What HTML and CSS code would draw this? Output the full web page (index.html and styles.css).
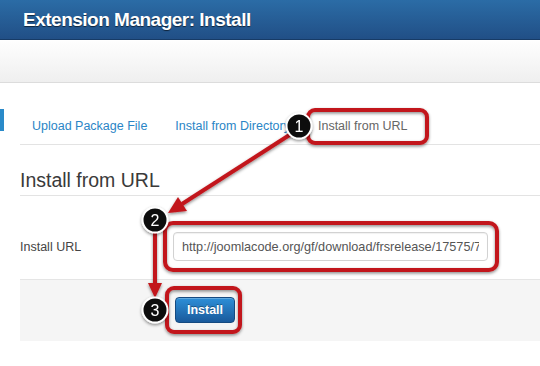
FILE: index.html
```html
<!DOCTYPE html>
<html lang="en">
<head>
    <meta charset="UTF-8">
    <meta name="viewport" content="width=device-width, initial-scale=1.0">
    <title>Extension Manager: Install</title>
    <link rel="stylesheet" href="styles.css">
</head>
<body>
    <header class="topbar">
        <h1>Extension Manager: Install</h1>
    </header>
    <div class="toolbar"></div>

    <div class="main">
        <div class="sidebar"><span class="sidebar-mark"></span></div>
        <div class="content">
            <ul class="tabs">
                <li><a href="#">Upload Package File</a></li>
                <li><a href="#">Install from Directory</a></li>
                <li class="active"><a href="#">Install from URL</a></li>
            </ul>

            <h2 class="legend">Install from URL</h2>

            <div class="control-group">
                <label for="install_url">Install URL</label>
                <input type="text" id="install_url" value="http://joomlacode.org/gf/download/frsrelease/17575/76986/Joomla_2.5.4-Stable-Full_Package.zip">
            </div>

            <div class="form-actions">
                <button type="button" class="btn-primary">Install</button>
            </div>
        </div>
    </div>

    <!-- Annotation layer -->
    <svg class="annotations" width="540" height="366" viewBox="0 0 540 366">
        <defs>
            <filter id="shadow" x="-20%" y="-20%" width="140%" height="140%">
                <feDropShadow dx="0" dy="1.5" stdDeviation="1.5" flood-color="#000" flood-opacity="0.45"/>
            </filter>
        </defs>
        <g filter="url(#shadow)">
            <rect class="mark-box" x="308" y="110" width="119" height="33" rx="7"/>
            <rect class="mark-box" x="165" y="223" width="332" height="47" rx="8"/>
            <rect class="mark-box" x="167" y="288" width="73" height="44" rx="7"/>

            <line class="arrow-line" x1="291" y1="134" x2="182" y2="204"/>
            <polygon class="arrow-head" points="168,213 178,197 187,211"/>

            <line class="arrow-line" x1="155" y1="232" x2="155" y2="284"/>
            <polygon class="arrow-head" points="155,298 148,283 162,283"/>
        </g>
        <g class="step" filter="url(#shadow)">
            <circle cx="299" cy="126" r="12.5"/>
            <text x="299" y="131.5">1</text>
            <circle cx="155" cy="220" r="12.5"/>
            <text x="155" y="225.5">2</text>
            <circle cx="155" cy="310" r="12.5"/>
            <text x="155" y="315.5">3</text>
        </g>
    </svg>
</body>
</html>
```

FILE: styles.css
```css
/* General Styles */
:root {
    --brand-blue: #2a8ac9;
    --link-color: #2a85c6;
    --border-color: #e3e3e3;
    --mark-red: #c2161c;
    --text-color: #333;
}

body {
    font-family: "Liberation Sans", Arial, sans-serif;
    font-size: 12.5px;
    color: var(--text-color);
    background-color: #fff;
    margin: 0;
    width: 540px;
    height: 366px;
    overflow: hidden;
    position: relative;
}

/* Header */
.topbar {
    height: 39px;
    background: linear-gradient(to bottom, #2b6ca6, #214f86);
    border-bottom: 1px solid #173b66;
    display: flex;
    align-items: center;
    padding-left: 23px;
}

.topbar h1 {
    margin: 1px 0 0;
    font-size: 19px;
    font-weight: bold;
    letter-spacing: -0.5px;
    color: #fff;
    text-shadow: 0 1px 1px rgba(0, 0, 0, 0.6);
}

.toolbar {
    height: 41px;
    border-top: 1px solid #fff;
    background: linear-gradient(to bottom, #fefefe, #efefef);
    border-bottom: 1px solid #dcdcdc;
}

/* Main area */
.main {
    display: flex;
    margin-top: 26px;
}

.sidebar {
    width: 20px;
    flex-shrink: 0;
}

.sidebar-mark {
    display: block;
    width: 4px;
    height: 22px;
    background-color: var(--brand-blue);
}

.content {
    flex: 1;
}

/* Tabs */
.tabs {
    list-style: none;
    margin: 0;
    padding: 0;
    display: flex;
    height: 35px;
    border-bottom: 1px solid var(--border-color);
}

.tabs li {
    margin-right: 4px;
}

.tabs a {
    display: block;
    line-height: 35px;
    padding: 0 12px;
    color: var(--link-color);
    text-decoration: none;
}

.tabs li.active a {
    color: #666;
    background-color: #fff;
}

/* Form */
.legend {
    margin: 20px 0 0;
    font-size: 19.5px;
    font-weight: normal;
    line-height: 30px;
    color: #3a3a3a;
    border-bottom: 1px solid var(--border-color);
}

.control-group {
    display: flex;
    align-items: center;
    margin-top: 36px;
}

.control-group label {
    width: 153px;
    flex-shrink: 0;
    color: #444;
}

.control-group input {
    width: 315px;
    height: 29px;
    box-sizing: border-box;
    padding: 4px 8px;
    font-family: "Liberation Sans", Arial, sans-serif;
    font-size: 12.7px;
    color: #555;
    border: 1px solid #d2d2d2;
    border-radius: 4px;
    box-shadow: inset 0 1px 1px rgba(0, 0, 0, 0.06);
}

.form-actions {
    margin-top: 18px;
    height: 62px;
    box-sizing: border-box;
    padding: 17px 0 0 155px;
    background-color: #f5f5f5;
    border-top: 1px solid #e5e5e5;
}

.btn-primary {
    width: 60px;
    height: 26px;
    padding: 0;
    font-family: "Liberation Sans", Arial, sans-serif;
    font-size: 12.5px;
    font-weight: bold;
    color: #fff;
    text-shadow: 0 -1px 0 rgba(0, 0, 0, 0.35);
    background: linear-gradient(to bottom, #2d8fd8, #1a5a9c);
    border: 1px solid #154a80;
    border-radius: 4px;
    box-shadow: inset 0 1px 0 rgba(255, 255, 255, 0.25);
}

/* Annotations */
.annotations {
    position: absolute;
    left: 0;
    top: 0;
    pointer-events: none;
}

.mark-box {
    fill: none;
    stroke: var(--mark-red);
    stroke-width: 4;
}

.arrow-line {
    stroke: var(--mark-red);
    stroke-width: 4;
}

.arrow-head {
    fill: var(--mark-red);
}

.step circle {
    fill: #111;
    stroke: #fff;
    stroke-width: 2;
}

.step text {
    fill: #fff;
    font-family: "Liberation Sans", Arial, sans-serif;
    font-size: 16px;
    text-anchor: middle;
}
```
